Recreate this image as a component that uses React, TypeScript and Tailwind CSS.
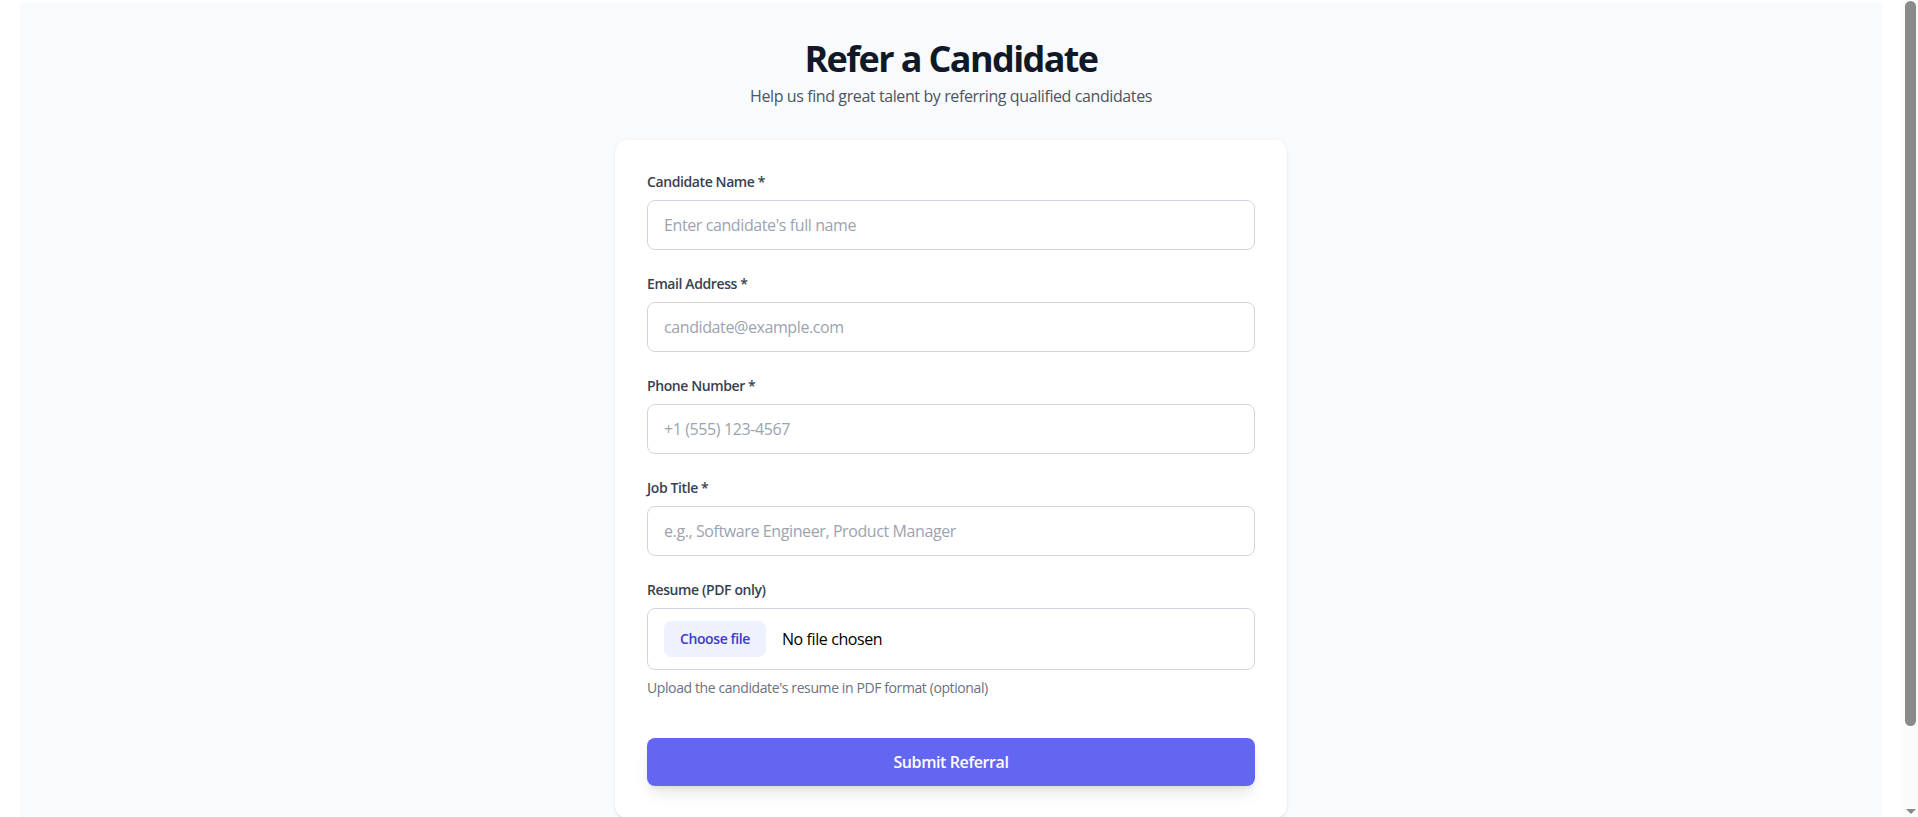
import { useState } from "react";

type Field = {
  id: string;
  label: string;
  type: string;
  placeholder: string;
};

const fields: Field[] = [
  { id: "name", label: "Candidate Name *", type: "text", placeholder: "Enter candidate's full name" },
  { id: "email", label: "Email Address *", type: "email", placeholder: "candidate@example.com" },
  { id: "phone", label: "Phone Number *", type: "tel", placeholder: "+1 (555) 123-4567" },
  { id: "job", label: "Job Title *", type: "text", placeholder: "e.g., Software Engineer, Product Manager" },
];

export default function App() {
  const [fileName, setFileName] = useState("");

  return (
    <div
      className="min-h-screen bg-white pl-[20px] pr-[36px] pt-[3px] tracking-[-0.025em]"
      style={{ fontFamily: '"Open Sans", "Noto Sans", sans-serif' }}
    >
      <div className="bg-[#f9fafb] px-4 pt-[36px] pb-[76px]">
        {/* Header */}
        <div className="mb-8 text-center">
          <h1 className="mb-[5px] text-4xl font-bold tracking-[-0.045em] text-[#111827]">
            Refer a Candidate
          </h1>
          <p className="text-base text-[#4b5563]">
            Help us find great talent by referring qualified candidates
          </p>
        </div>

        {/* Form card */}
        <form
          className="mx-auto max-w-2xl rounded-xl bg-white p-8 shadow-sm"
          onSubmit={(e) => e.preventDefault()}
        >
          <div className="space-y-6">
            {fields.map((f) => (
              <div key={f.id}>
                <label htmlFor={f.id} className="mb-2 block text-sm font-semibold text-[#374151]">
                  {f.label}
                </label>
                <input
                  id={f.id}
                  type={f.type}
                  placeholder={f.placeholder}
                  className="block w-full rounded-lg border border-[#d1d5db] px-4 py-3 text-base tracking-[-0.025em] text-[#111827] placeholder:text-[#9ca3af] focus:outline-none"
                />
              </div>
            ))}

            <div>
              <label htmlFor="resume" className="mb-2 block text-sm font-semibold text-[#374151]">
                Resume (PDF only)
              </label>
              <label
                htmlFor="resume"
                className="flex w-full cursor-pointer items-center rounded-lg border border-[#d1d5db] px-4 py-3"
              >
                <span className="mr-4 rounded-lg bg-[#eef2ff] px-4 py-2 text-sm font-semibold text-[#4338ca]">
                  Choose file
                </span>
                <span className="text-base text-black">{fileName || "No file chosen"}</span>
                <input
                  id="resume"
                  type="file"
                  accept="application/pdf"
                  className="sr-only"
                  onChange={(e) => setFileName(e.target.files?.[0]?.name ?? "")}
                />
              </label>
              <p className="mt-2 text-sm text-[#6b7280]">
                Upload the candidate's resume in PDF format (optional)
              </p>
            </div>

            <div className="pt-4">
              <button
                type="submit"
                className="w-full rounded-lg bg-[#6366f1] py-3 text-base font-semibold tracking-[-0.025em] text-white shadow-lg"
              >
                Submit Referral
              </button>
            </div>
          </div>
        </form>
      </div>

      {/* Window scrollbar as seen in the capture */}
      <div aria-hidden="true" className="fixed right-0 top-0 flex h-screen w-[15px] flex-col items-center bg-[#fbfbfb]">
        <div className="mt-px h-[725px] w-[11px] rounded-full bg-[#8a8a8a]" />
        <div className="mt-auto mb-[3px] h-0 w-0 border-x-[5px] border-t-[5px] border-x-transparent border-t-[#8a8a8a]" />
      </div>
    </div>
  );
}
